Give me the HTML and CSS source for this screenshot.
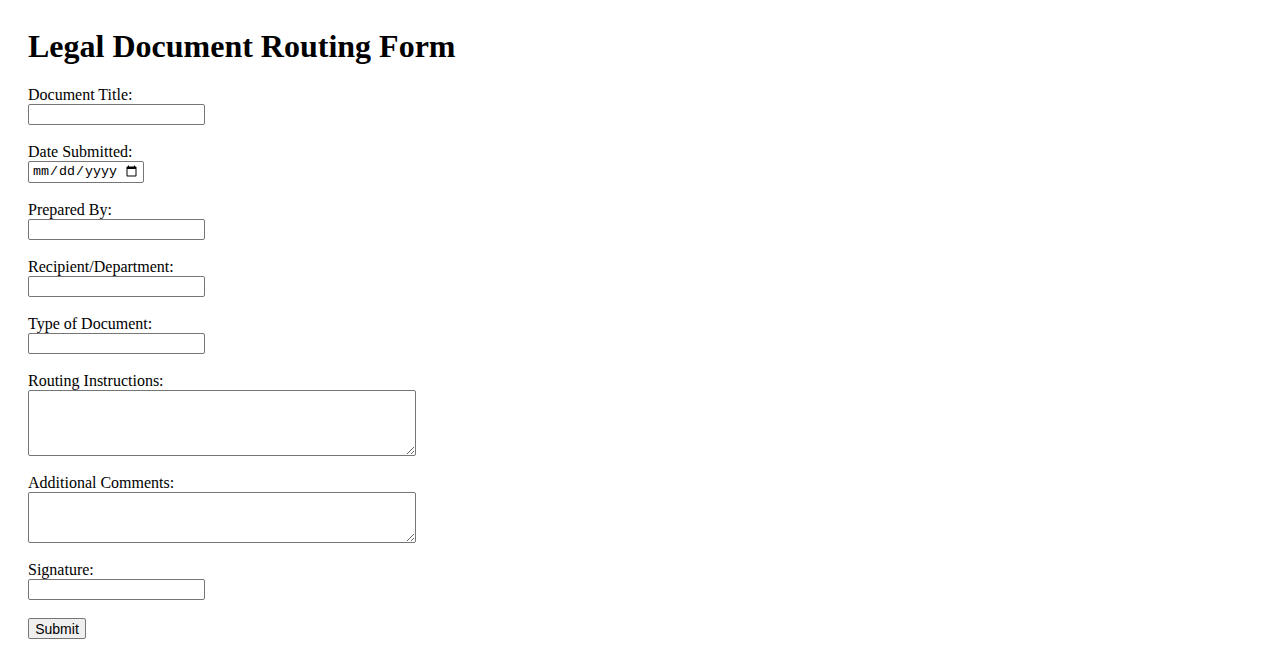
FILE: index.html
```html
<!DOCTYPE html>
<html lang="en">
<head>
<meta charset="utf-8">
<title>Legal Document Routing Form</title>
<link rel="stylesheet" href="styles.css">
</head>
<body>
<main class="page">
  <h1 class="title">Legal Document Routing Form</h1>
  <form class="form">
    <div class="field">
      <label class="label" for="title">Document Title:</label>
      <input class="text" type="text" id="title">
    </div>
    <div class="field">
      <label class="label" for="date">Date Submitted:</label>
      <input class="date" type="date" id="date">
    </div>
    <div class="field">
      <label class="label" for="prepared">Prepared By:</label>
      <input class="text" type="text" id="prepared">
    </div>
    <div class="field">
      <label class="label" for="recipient">Recipient/Department:</label>
      <input class="text" type="text" id="recipient">
    </div>
    <div class="field">
      <label class="label" for="type">Type of Document:</label>
      <input class="text" type="text" id="type">
    </div>
    <div class="field">
      <label class="label" for="routing">Routing Instructions:</label>
      <textarea class="area area-tall" id="routing"></textarea>
    </div>
    <div class="field">
      <label class="label" for="comments">Additional Comments:</label>
      <textarea class="area area-short" id="comments"></textarea>
    </div>
    <div class="field">
      <label class="label" for="signature">Signature:</label>
      <input class="text" type="text" id="signature">
    </div>
    <button class="submit" type="submit">Submit</button>
  </form>
</main>
</body>
</html>
```

FILE: styles.css
```css
html, body {
  margin: 0;
  padding: 0;
  background: #ffffff;
}

body {
  font-family: "Liberation Serif", "Times New Roman", serif;
  font-size: 16px;
  color: #000000;
}

.page {
  padding: 28px 28px 0 28px;
}

.title {
  margin: 0 0 21px 0;
  font-size: 32px;
  line-height: 37px;
  font-weight: bold;
}

.form {
  display: flex;
  flex-direction: column;
  align-items: flex-start;
}

.field {
  display: flex;
  flex-direction: column;
  align-items: flex-start;
  margin-bottom: 18px;
}

.label {
  display: block;
  line-height: 18px;
  height: 18px;
}

.text,
.date,
.area {
  box-sizing: border-box;
  margin: 0;
  border: 1px solid #767676;
  border-radius: 2px;
  background: #ffffff;
  font-family: "Liberation Sans", Arial, sans-serif;
  font-size: 13.33px;
}

.text {
  width: 177px;
  height: 21px;
  padding: 1px 2px;
}

.date {
  width: 116px;
  height: 22px;
  padding: 1px 3px;
  font-family: "Liberation Mono", "DejaVu Sans Mono", monospace;
  font-size: 13.33px;
}

.area {
  width: 388px;
  padding: 2px;
  font-family: "Liberation Mono", monospace;
  resize: both;
}

.area-tall {
  height: 66px;
}

.area-short {
  height: 51px;
}

.submit {
  box-sizing: border-box;
  margin: 0;
  width: 58px;
  height: 21px;
  padding: 1px 6px;
  border: 1px solid #767676;
  border-radius: 2px;
  background: #efefef;
  font-family: "Liberation Sans", Arial, sans-serif;
  font-size: 14px;
  color: #000000;
}
```
